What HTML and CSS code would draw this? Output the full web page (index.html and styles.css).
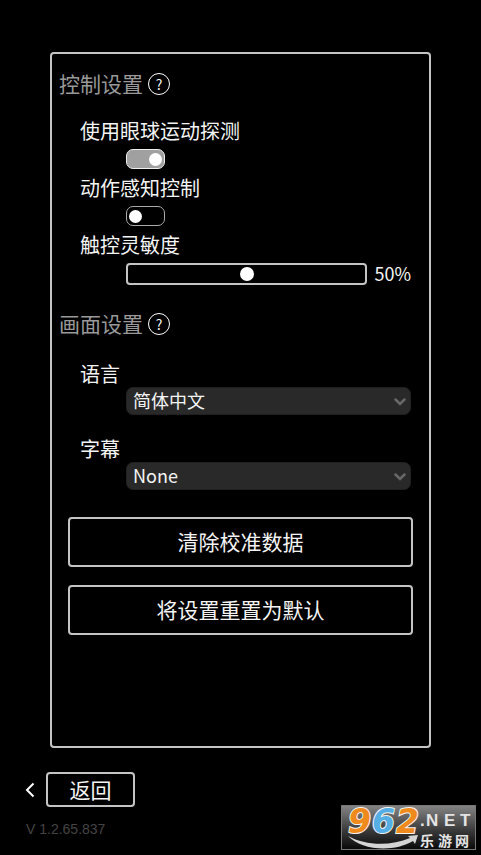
FILE: index.html
```html
<!DOCTYPE html>
<html lang="zh-CN">
<head>
<meta charset="utf-8">
<meta name="viewport" content="width=device-width, initial-scale=1">
<title>设置</title>
<link rel="stylesheet" href="styles.css">
</head>
<body>
<main class="panel">
  <section class="controls">
    <header class="heading">
      <h2>控制设置</h2>
      <button class="help" type="button">?</button>
    </header>
    <div class="setting">
      <label for="eye">使用眼球运动探测</label>
      <input class="toggle" id="eye" type="checkbox" checked>
    </div>
    <div class="setting">
      <label for="motion">动作感知控制</label>
      <input class="toggle" id="motion" type="checkbox">
    </div>
    <div class="setting">
      <label for="touch">触控灵敏度</label>
      <div class="slider-row">
        <input class="slider" id="touch" type="range" min="0" max="100" value="50">
        <output for="touch">50%</output>
      </div>
    </div>
  </section>
  <section class="display">
    <header class="heading">
      <h2>画面设置</h2>
      <button class="help" type="button">?</button>
    </header>
    <div class="choice">
      <label for="language">语言</label>
      <div class="select-box">
        <select id="language"><option>简体中文</option></select>
        <svg class="chevron" viewBox="0 0 12 8"><path d="M1.5 1.5 6 6l4.5-4.5"/></svg>
      </div>
    </div>
    <div class="choice">
      <label for="subtitle">字幕</label>
      <div class="select-box">
        <select id="subtitle"><option>None</option></select>
        <svg class="chevron" viewBox="0 0 12 8"><path d="M1.5 1.5 6 6l4.5-4.5"/></svg>
      </div>
    </div>
  </section>
  <div class="actions">
    <button class="outlined" type="button">清除校准数据</button>
    <button class="outlined" type="button">将设置重置为默认</button>
  </div>
</main>
<footer class="footer">
  <div class="back-row">
    <svg class="back-arrow" viewBox="0 0 10 16"><path d="M8.5 1.5 2 8l6.500 6.500"/></svg>
    <button class="outlined back" type="button">返回</button>
  </div>
  <p class="version">V 1.2.65.837</p>
</footer>
<aside class="badge">
  <svg viewBox="0 0 135 45">
    <defs>
      <linearGradient id="plate" x1="0" y1="0" x2="0" y2="1">
        <stop offset="0" stop-color="#858585"/>
        <stop offset="0.55" stop-color="#3c3c3c"/>
        <stop offset="1" stop-color="#080808"/>
      </linearGradient>
    </defs>
    <rect x="0.500" y="0.500" width="134" height="44" fill="url(#plate)" stroke="#777"/>
    <path d="M7 31C20 45 52 48 72 36l2 3 3-9-10 1 2 2C50 41 25 41 7 31Z" fill="#d4d4d4"/>
    <g class="badge-number">
      <text x="7" y="28" fill="#ef8b1d">9</text>
      <text x="31" y="28" fill="#55aee4">6</text>
      <text x="55" y="28" fill="#ef8b1d">2</text>
    </g>
    <text class="badge-net" x="79" y="21">.</text>
    <text class="badge-net" x="85" y="21">N</text>
    <text class="badge-net" x="103" y="21">E</text>
    <text class="badge-net" x="119" y="21">T</text>
    <text class="badge-name" x="79" y="41">乐</text>
    <text class="badge-name" x="97" y="41">游</text>
    <text class="badge-name" x="114" y="41">网</text>
  </svg>
</aside>
</body>
</html>
```
FILE: styles.css
```css
* {
  box-sizing: border-box;
}

body {
  position: relative;
  display: flex;
  flex-direction: column;
  min-height: 100vh;
  margin: 0;
  padding-top: 52px;
  background: #000;
  color: #f4f4f4;
  font-family: "Noto Sans CJK SC", sans-serif;
}

button,
select {
  margin: 0;
  color: inherit;
  font-family: inherit;
}

.panel {
  display: flex;
  flex: 1;
  flex-direction: column;
  margin: 0 50px;
  padding: 19px 0;
  border: 2px solid #c4c4c4;
  border-radius: 4px;
}

.heading {
  display: flex;
  align-items: center;
  gap: 5px;
  height: 22px;
  padding-left: 7px;
}

.heading h2 {
  margin: 0;
  padding-bottom: 2px;
  color: #999;
  font-size: 21px;
  font-weight: 400;
  line-height: 20px;
}

.help {
  width: 22px;
  height: 22px;
  padding: 0;
  border: 1px solid #fff;
  border-radius: 50%;
  background: none;
  font-size: 14px;
  line-height: 18px;
}

.controls .heading {
  margin-bottom: 23px;
}

.display .heading {
  margin: 22px 0 26px;
}

.setting,
.choice {
  display: flex;
  flex-direction: column;
  padding: 0 18px 0 28px;
}

.setting {
  gap: 5px;
  margin-bottom: 6px;
}

.choice {
  margin-bottom: 21px;
}

label {
  font-size: 20px;
  line-height: 26px;
}

.toggle {
  display: flex;
  align-items: center;
  width: 39px;
  height: 20px;
  margin: 0 0 0 46px;
  padding: 0 2px;
  border: 1px solid #aaa;
  border-radius: 7px;
  appearance: none;
}

.toggle::before {
  width: 13px;
  height: 13px;
  border-radius: 50%;
  background: #fff;
  content: "";
}

.toggle:checked {
  justify-content: flex-end;
  border-color: #eee;
  background: #a0a0a0;
}

.slider-row {
  display: flex;
  align-items: center;
  gap: 7px;
  height: 22px;
  margin-left: 46px;
}

.slider {
  flex: 1;
  min-width: 0;
  height: 22px;
  margin: 0;
  border: 2px solid #c4c4c4;
  border-radius: 4px;
  background: #000;
  appearance: none;
}

.slider::-webkit-slider-thumb {
  width: 14px;
  height: 14px;
  border-radius: 50%;
  background: #fff;
  appearance: none;
}

output {
  padding-bottom: 2px;
  font-size: 18px;
  line-height: 20px;
}

.select-box {
  position: relative;
  margin-left: 46px;
}

select {
  display: block;
  width: 100%;
  height: 28px;
  padding: 0 28px 2px 6px;
  border: 1px solid #202020;
  border-radius: 7px;
  background: #292929;
  font-size: 18px;
  line-height: 24px;
  appearance: none;
}

.chevron {
  position: absolute;
  top: 11px;
  right: 5px;
  width: 12px;
  height: 8px;
  pointer-events: none;
}

.chevron path {
  fill: none;
  stroke: #686868;
  stroke-width: 2.500;
  stroke-linecap: round;
}

.actions {
  display: flex;
  flex-direction: column;
  gap: 18px;
  margin-top: 6px;
  padding: 0 16px;
}

.outlined {
  height: 50px;
  padding: 0 0 2px;
  border: 2px solid #c4c4c4;
  border-radius: 4px;
  background: none;
  font-size: 21px;
  line-height: 28px;
}

.footer {
  padding: 24px 25px 16px;
}

.back-row {
  display: flex;
  align-items: center;
  gap: 11px;
}

.back-arrow {
  width: 10px;
  height: 16px;
}

.back-arrow path {
  fill: none;
  stroke: #fff;
  stroke-width: 2;
}

.back {
  width: 89px;
  height: 35px;
}

.version {
  margin: 12px 0 0;
  padding-left: 1px;
  color: #444;
  font-family: "Liberation Sans", sans-serif;
  font-size: 14px;
  line-height: 20px;
}

.badge {
  position: absolute;
  right: 5px;
  bottom: 5px;
  width: 135px;
  height: 45px;
}

.badge svg {
  display: block;
  width: 100%;
  overflow: visible;
}

.badge-number {
  font: italic 700 33px "DejaVu Sans", sans-serif;
  stroke: #f4f4f4;
  stroke-width: 2;
  paint-order: stroke;
}

.badge-net {
  fill: #e4e4e4;
  font: 700 17px "Liberation Sans", sans-serif;
}

.badge-name {
  fill: #e4e4e4;
  font: 700 14px "Noto Sans CJK SC", sans-serif;
}
```
